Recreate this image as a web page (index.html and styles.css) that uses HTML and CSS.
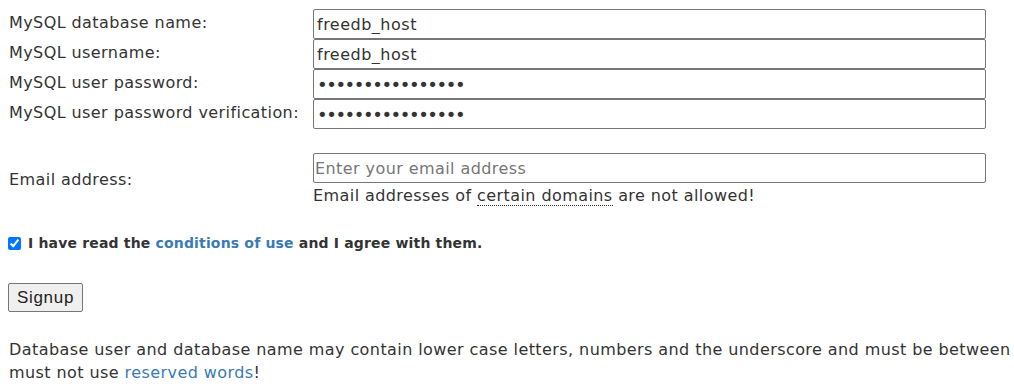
FILE: index.html
```html
<!DOCTYPE html>
<html>
<head>
<meta charset="utf-8">
<link rel="stylesheet" href="styles.css">
</head>
<body>
<form class="signup">
  <div class="grid">
    <label class="lbl">MySQL database name:</label>
    <input class="field" type="text" value="freedb_host">
    <label class="lbl">MySQL username:</label>
    <input class="field" type="text" value="freedb_host">
    <label class="lbl">MySQL user password:</label>
    <input class="field pw" type="password" value="aaaaaaaaaaaaaaaa">
    <label class="lbl">MySQL user password verification:</label>
    <input class="field pw" type="password" value="aaaaaaaaaaaaaaaa">
    <div class="spacer"></div>
    <label class="lbl email-lbl">Email address:</label>
    <div class="email-cell">
      <input class="field email" type="email" placeholder="Enter your email address">
      <div class="note">Email addresses of <span class="dotted">certain domains</span> are not allowed!</div>
    </div>
  </div>
  <div class="agree">
    <input type="checkbox" class="chk" checked>
    <span>I have read the <a href="#">conditions of use</a> and I agree with them.</span>
  </div>
  <button type="button" class="btn">Signup</button>
  <p class="info">Database user and database name may contain lower case letters, numbers and the underscore and must be between<br>must not use <a href="#">reserved words</a>!</p>
</form>
</body>
</html>
```
FILE: styles.css
```css
html, body {
  margin: 0;
  background: #fff;
  overflow: hidden;
}
body {
  padding: 9px 8px 0 8px;
  font-family: "DejaVu Sans", Verdana, sans-serif;
  font-size: 16px;
  letter-spacing: 0.42px;
  color: #333;
}
a {
  color: #3a7ab5;
  text-decoration: none;
}
.grid {
  display: grid;
  grid-template-columns: 305px 673px;
  grid-template-rows: 30px 30px 30px 30px 24px 30px 24px;
}
.lbl {
  display: flex;
  align-items: center;
  padding-left: 1px;
  padding-bottom: 3px;
}
.field {
  box-sizing: border-box;
  height: 30px;
  width: 673px;
  margin: 0;
  border: 1px solid #767676;
  border-radius: 2px;
  padding: 1px 3px;
  font-family: "DejaVu Sans", Verdana, sans-serif;
  font-size: 16px;
  letter-spacing: 0.5px;
  color: #333;
  background: #fff;
}
.pw {
  font-size: 18px;
  letter-spacing: -1.42px;
  padding-left: 3px;
}
.spacer {
  grid-column: 1 / 3;
}
.email-lbl {
  grid-row: span 2;
  padding-bottom: 2px;
}
.email-cell {
  grid-row: span 2;
}
.email {
  padding-left: 1px;
  letter-spacing: 0.42px;
}
.email::placeholder {
  color: #767676;
}
.note {
  line-height: 22px;
  height: 22px;
  padding-top: 2px;
}
.dotted {
  border-bottom: 1px dotted #333;
}
.agree {
  display: flex;
  align-items: center;
  height: 20px;
  margin-top: 26px;
  font-weight: bold;
  font-size: 14px;
  letter-spacing: 0.17px;
}
.chk {
  margin: 0 7px 0 0;
  width: 13px;
  height: 13px;
}
.btn {
  display: block;
  box-sizing: border-box;
  margin-top: 30px;
  height: 29px;
  width: 75px;
  padding: 0;
  font-family: "Liberation Sans", Arial, sans-serif;
  font-size: 17px;
  letter-spacing: 0.7px;
  color: #222;
  background: #efefef;
  border: 1px solid #767676;
  border-radius: 2px;
}
.info {
  margin: 26px 0 0 1px;
  line-height: 23px;
  white-space: nowrap;
}
```
